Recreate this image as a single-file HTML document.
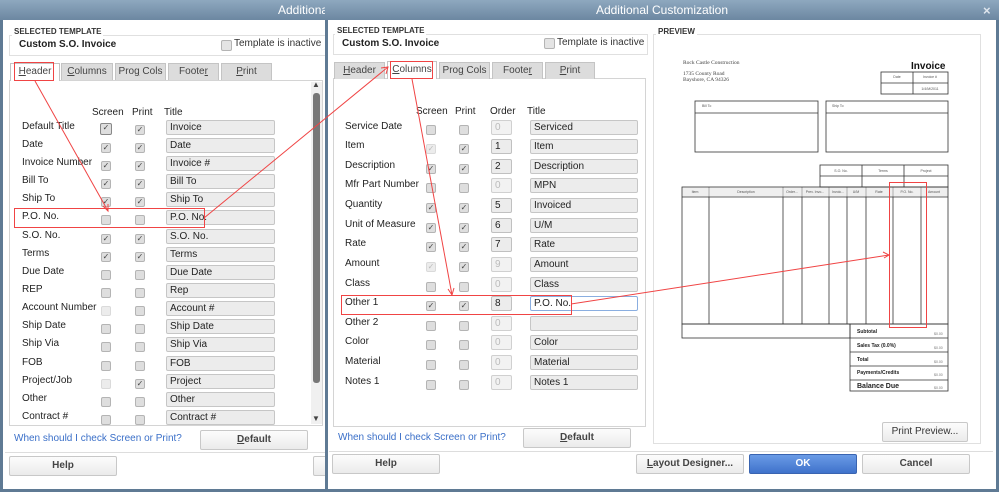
<!DOCTYPE html>
<html><head><meta charset="utf-8"><style>
*{margin:0;padding:0;box-sizing:border-box}
body{width:999px;height:493px;overflow:hidden;background:#fff;font-family:"Liberation Sans",Arial,sans-serif;font-size:10px;color:#222;position:relative}
.a{position:absolute}
.tb{position:absolute;height:20px;background:linear-gradient(#8ea8bf,#6c87a1);color:#fff;font-size:12px;line-height:20px}
.frame{position:absolute;border:3px solid #5f7a94;border-top:none;background:#fff}
.fs{position:absolute;border:1px solid #e0e0e0}
.leg{position:absolute;background:#fff;font-size:8px;font-weight:bold;color:#333;padding:0 2px;line-height:9px}
.tab{position:absolute;height:17px;background:#dcdcdc;border:1px solid #c4c4c4;border-bottom:none;font-size:10px;color:#444;text-align:center;line-height:16px}
.tab.on{background:#fff;height:18px}
.panel{position:absolute;border:1px solid #d4d4d4;background:#fff}
.r{position:absolute;left:0;width:1px;height:16px}
.lb{position:absolute;top:1px;white-space:nowrap;font-size:10px;color:#222}
.cb{position:absolute;top:5px;width:10px;height:10px;background:#dedede;border:1px solid #b4b4b4;border-radius:2px;font-style:normal;font-size:8px;line-height:8px;text-align:center;color:#444}
.cb.k::after{content:"✓"}
.cb.d{background:#ececec;border-color:#dadada;color:#bbb}
.in{position:absolute;top:0;height:15px;background:#ececec;border:1px solid #c6c6c6;border-radius:2px;padding-left:3px;font-size:10px;line-height:13px;color:#222;white-space:nowrap}
.od{position:absolute;top:0;height:15px;width:21px;background:#f2f2f2;border:1px solid #d0d0d0;border-radius:2px;padding-left:3px;font-size:10px;line-height:13px;color:#bbb}
.od.e{background:#ececec;border-color:#c0c0c0;color:#222}
.btn{position:absolute;height:20px;background:linear-gradient(#fcfcfc,#ebebeb);border:1px solid #c8c8c8;border-radius:2px;font-size:10px;font-weight:bold;color:#444;text-align:center;line-height:18px}
.hd{position:absolute;font-size:10px;color:#222}
.lnk{position:absolute;color:#3a6fc8;font-size:10px}
.sep{position:absolute;height:1px;background:#ddd}
u{text-decoration:underline}
</style></head><body>

<!-- LEFT DIALOG -->
<div class="frame" style="left:0;top:0;width:330px;height:492px"></div>
<div class="tb" style="left:0;top:0;width:330px;padding-left:278px">Additional C</div>
<div class="fs" style="left:9px;top:35px;width:320px;height:21px"></div>
<div class="leg" style="left:12px;top:27px">SELECTED TEMPLATE</div>
<div class="a" style="left:19px;top:39px;font-weight:bold;font-size:10px">Custom S.O. Invoice</div>
<i class="cb" style="left:221px;top:40px;width:11px;height:11px;background:#e4e4e4"></i>
<div class="a" style="left:234px;top:38px;font-size:10px;color:#333">Template is inactive</div>

<div class="panel" style="left:9px;top:80px;width:314px;height:346px"></div>
<div class="tab on" style="left:10px;top:63px;width:50px"><u>H</u>eader</div>
<div class="tab" style="left:61px;top:63px;width:52px"><u>C</u>olumns</div>
<div class="tab" style="left:115px;top:63px;width:51px">Pro<u>g</u> Cols</div>
<div class="tab" style="left:168px;top:63px;width:51px">Foote<u>r</u></div>
<div class="tab" style="left:221px;top:63px;width:51px"><u>P</u>rint</div>
<div class="a" style="left:311px;top:82px;width:11px;height:342px;background:#f0f0f0"></div>
<div class="a" style="left:313px;top:93px;width:7px;height:290px;background:#777;border-radius:3px"></div>
<div class="a" style="left:312px;top:80px;font-size:8px;color:#444">▲</div>
<div class="a" style="left:312px;top:414px;font-size:8px;color:#444">▼</div>

<div class="hd" style="left:92px;top:107px">Screen</div>
<div class="hd" style="left:132px;top:107px">Print</div>
<div class="hd" style="left:164px;top:107px">Title</div>

<div class="r" style="top:120px"><span class="lb" style="left:22px">Default Title</span><i class="cb k" style="left:100px;top:3px;width:12px;height:12px;border-color:#888"></i><i class="cb k" style="left:135px"></i><span class="in" style="left:166px;width:109px">Invoice</span></div>
<div class="r" style="top:138px"><span class="lb" style="left:22px">Date</span><i class="cb k" style="left:101px"></i><i class="cb k" style="left:135px"></i><span class="in" style="left:166px;width:109px">Date</span></div>
<div class="r" style="top:156px"><span class="lb" style="left:22px">Invoice Number</span><i class="cb k" style="left:101px"></i><i class="cb k" style="left:135px"></i><span class="in" style="left:166px;width:109px">Invoice #</span></div>
<div class="r" style="top:174px"><span class="lb" style="left:22px">Bill To</span><i class="cb k" style="left:101px"></i><i class="cb k" style="left:135px"></i><span class="in" style="left:166px;width:109px">Bill To</span></div>
<div class="r" style="top:192px"><span class="lb" style="left:22px">Ship To</span><i class="cb k" style="left:101px"></i><i class="cb k" style="left:135px"></i><span class="in" style="left:166px;width:109px">Ship To</span></div>
<div class="r" style="top:210px"><span class="lb" style="left:22px">P.O. No.</span><i class="cb" style="left:101px"></i><i class="cb" style="left:135px"></i><span class="in" style="left:166px;width:109px">P.O. No.</span></div>
<div class="r" style="top:229px"><span class="lb" style="left:22px">S.O. No.</span><i class="cb k" style="left:101px"></i><i class="cb k" style="left:135px"></i><span class="in" style="left:166px;width:109px">S.O. No.</span></div>
<div class="r" style="top:247px"><span class="lb" style="left:22px">Terms</span><i class="cb k" style="left:101px"></i><i class="cb k" style="left:135px"></i><span class="in" style="left:166px;width:109px">Terms</span></div>
<div class="r" style="top:265px"><span class="lb" style="left:22px">Due Date</span><i class="cb" style="left:101px"></i><i class="cb" style="left:135px"></i><span class="in" style="left:166px;width:109px">Due Date</span></div>
<div class="r" style="top:283px"><span class="lb" style="left:22px">REP</span><i class="cb" style="left:101px"></i><i class="cb" style="left:135px"></i><span class="in" style="left:166px;width:109px">Rep</span></div>
<div class="r" style="top:301px"><span class="lb" style="left:22px">Account Number</span><i class="cb d" style="left:101px"></i><i class="cb" style="left:135px"></i><span class="in" style="left:166px;width:109px">Account #</span></div>
<div class="r" style="top:319px"><span class="lb" style="left:22px">Ship Date</span><i class="cb" style="left:101px"></i><i class="cb" style="left:135px"></i><span class="in" style="left:166px;width:109px">Ship Date</span></div>
<div class="r" style="top:337px"><span class="lb" style="left:22px">Ship Via</span><i class="cb" style="left:101px"></i><i class="cb" style="left:135px"></i><span class="in" style="left:166px;width:109px">Ship Via</span></div>
<div class="r" style="top:356px"><span class="lb" style="left:22px">FOB</span><i class="cb" style="left:101px"></i><i class="cb" style="left:135px"></i><span class="in" style="left:166px;width:109px">FOB</span></div>
<div class="r" style="top:374px"><span class="lb" style="left:22px">Project/Job</span><i class="cb d" style="left:101px"></i><i class="cb k" style="left:135px"></i><span class="in" style="left:166px;width:109px">Project</span></div>
<div class="r" style="top:392px"><span class="lb" style="left:22px">Other</span><i class="cb" style="left:101px"></i><i class="cb" style="left:135px"></i><span class="in" style="left:166px;width:109px">Other</span></div>
<div class="r" style="top:410px"><span class="lb" style="left:22px">Contract #</span><i class="cb" style="left:101px"></i><i class="cb" style="left:135px"></i><span class="in" style="left:166px;width:109px">Contract #</span></div>

<div class="lnk" style="left:14px;top:433px">When should I check Screen or Print?</div>
<div class="btn" style="left:200px;top:430px;width:108px"><u>D</u>efault</div>
<div class="sep" style="left:5px;top:452px;width:322px"></div>
<div class="btn" style="left:9px;top:456px;width:108px">Help</div>
<div class="btn" style="left:313px;top:456px;width:20px"></div>

<!-- MIDDLE / RIGHT DIALOG -->
<div class="frame" style="left:325px;top:0;width:674px;height:492px"></div>
<div class="tb" style="left:325px;top:0;width:674px;text-align:center">Additional Customization</div>
<div class="a" style="left:983px;top:3px;color:#dfe6ee;font-size:13px;font-weight:bold">×</div>

<div class="fs" style="left:333px;top:34px;width:315px;height:21px"></div>
<div class="leg" style="left:335px;top:26px">SELECTED TEMPLATE</div>
<div class="a" style="left:342px;top:38px;font-weight:bold;font-size:10px">Custom S.O. Invoice</div>
<i class="cb" style="left:544px;top:38px;width:11px;height:11px;background:#e4e4e4"></i>
<div class="a" style="left:557px;top:37px;font-size:10px;color:#333">Template is inactive</div>

<div class="panel" style="left:333px;top:78px;width:313px;height:349px"></div>
<div class="tab" style="left:334px;top:62px;width:51px"><u>H</u>eader</div>
<div class="tab on" style="left:387px;top:61px;width:50px"><u>C</u>olumns</div>
<div class="tab" style="left:439px;top:62px;width:51px">Pro<u>g</u> Cols</div>
<div class="tab" style="left:492px;top:62px;width:51px">Foote<u>r</u></div>
<div class="tab" style="left:545px;top:62px;width:50px"><u>P</u>rint</div>

<div class="hd" style="left:416px;top:106px">Screen</div>
<div class="hd" style="left:455px;top:106px">Print</div>
<div class="hd" style="left:490px;top:106px">Order</div>
<div class="hd" style="left:527px;top:106px">Title</div>

<div class="r" style="top:120px"><span class="lb" style="left:345px">Service Date</span><i class="cb" style="left:426px"></i><i class="cb" style="left:459px"></i><span class="od" style="left:491px">0</span><span class="in" style="left:530px;width:108px">Serviced</span></div>
<div class="r" style="top:139px"><span class="lb" style="left:345px">Item</span><i class="cb k d" style="left:426px"></i><i class="cb k" style="left:459px"></i><span class="od e" style="left:491px">1</span><span class="in" style="left:530px;width:108px">Item</span></div>
<div class="r" style="top:159px"><span class="lb" style="left:345px">Description</span><i class="cb k" style="left:426px"></i><i class="cb k" style="left:459px"></i><span class="od e" style="left:491px">2</span><span class="in" style="left:530px;width:108px">Description</span></div>
<div class="r" style="top:178px"><span class="lb" style="left:345px">Mfr Part Number</span><i class="cb" style="left:426px"></i><i class="cb" style="left:459px"></i><span class="od" style="left:491px">0</span><span class="in" style="left:530px;width:108px">MPN</span></div>
<div class="r" style="top:198px"><span class="lb" style="left:345px">Quantity</span><i class="cb k" style="left:426px"></i><i class="cb k" style="left:459px"></i><span class="od e" style="left:491px">5</span><span class="in" style="left:530px;width:108px">Invoiced</span></div>
<div class="r" style="top:218px"><span class="lb" style="left:345px">Unit of Measure</span><i class="cb k" style="left:426px"></i><i class="cb k" style="left:459px"></i><span class="od e" style="left:491px">6</span><span class="in" style="left:530px;width:108px">U/M</span></div>
<div class="r" style="top:237px"><span class="lb" style="left:345px">Rate</span><i class="cb k" style="left:426px"></i><i class="cb k" style="left:459px"></i><span class="od e" style="left:491px">7</span><span class="in" style="left:530px;width:108px">Rate</span></div>
<div class="r" style="top:257px"><span class="lb" style="left:345px">Amount</span><i class="cb k d" style="left:426px"></i><i class="cb k" style="left:459px"></i><span class="od" style="left:491px">9</span><span class="in" style="left:530px;width:108px">Amount</span></div>
<div class="r" style="top:277px"><span class="lb" style="left:345px">Class</span><i class="cb" style="left:426px"></i><i class="cb" style="left:459px"></i><span class="od" style="left:491px">0</span><span class="in" style="left:530px;width:108px">Class</span></div>
<div class="r" style="top:296px"><span class="lb" style="left:345px">Other 1</span><i class="cb k" style="left:426px"></i><i class="cb k" style="left:459px"></i><span class="od e" style="left:491px">8</span><span class="in" style="left:530px;width:108px;background:#fff;border-color:#8aaee0">P.O. No.</span></div>
<div class="r" style="top:316px"><span class="lb" style="left:345px">Other 2</span><i class="cb" style="left:426px"></i><i class="cb" style="left:459px"></i><span class="od" style="left:491px">0</span><span class="in" style="left:530px;width:108px"></span></div>
<div class="r" style="top:335px"><span class="lb" style="left:345px">Color</span><i class="cb" style="left:426px"></i><i class="cb" style="left:459px"></i><span class="od" style="left:491px">0</span><span class="in" style="left:530px;width:108px">Color</span></div>
<div class="r" style="top:355px"><span class="lb" style="left:345px">Material</span><i class="cb" style="left:426px"></i><i class="cb" style="left:459px"></i><span class="od" style="left:491px">0</span><span class="in" style="left:530px;width:108px">Material</span></div>
<div class="r" style="top:375px"><span class="lb" style="left:345px">Notes 1</span><i class="cb" style="left:426px"></i><i class="cb" style="left:459px"></i><span class="od" style="left:491px">0</span><span class="in" style="left:530px;width:108px">Notes 1</span></div>

<div class="lnk" style="left:338px;top:432px">When should I check Screen or Print?</div>
<div class="btn" style="left:523px;top:428px;width:108px"><u>D</u>efault</div>
<div class="sep" style="left:329px;top:451px;width:664px"></div>
<div class="btn" style="left:332px;top:454px;width:108px">Help</div>
<div class="btn" style="left:636px;top:454px;width:108px"><u>L</u>ayout Designer...</div>
<div class="btn" style="left:749px;top:454px;width:108px;background:linear-gradient(#6a9be6,#3f72cb);border-color:#3a64b0;color:#fff">OK</div>
<div class="btn" style="left:862px;top:454px;width:108px">Cancel</div>

<!-- PREVIEW -->
<div class="fs" style="left:653px;top:34px;width:328px;height:410px"></div>
<div class="leg" style="left:656px;top:27px">PREVIEW</div>
<div class="btn" style="left:882px;top:422px;width:86px;font-weight:normal;color:#333">Print Preview...</div>

<svg class="a" style="left:0;top:0" width="999" height="493" viewBox="0 0 999 493">
<g font-family="Liberation Serif,serif" font-size="5.5" fill="#444">
<text x="683" y="64">Rock Castle Construction</text>
<text x="683" y="75">1735 County Road</text>
<text x="683" y="81">Bayshore, CA 94326</text>
</g>
<text x="911" y="69" font-family="Liberation Sans,sans-serif" font-weight="bold" font-size="10" fill="#111">Invoice</text>
<g fill="none" stroke="#333" stroke-width="0.8">
<rect x="881" y="72" width="67" height="22"/><line x1="881" y1="83" x2="948" y2="83"/><line x1="913" y1="72" x2="913" y2="94"/>
<rect x="695" y="101" width="123" height="51"/><line x1="695" y1="113" x2="818" y2="113"/>
<rect x="826" y="101" width="122" height="51"/><line x1="826" y1="113" x2="948" y2="113"/>
<rect x="820" y="165" width="128" height="22"/><line x1="820" y1="176" x2="948" y2="176"/><line x1="862" y1="165" x2="862" y2="187"/><line x1="904" y1="165" x2="904" y2="187"/>
<rect x="682" y="187" width="266" height="137"/><line x1="682" y1="197" x2="948" y2="197"/>
<line x1="709" y1="187" x2="709" y2="324"/><line x1="783" y1="187" x2="783" y2="324"/><line x1="802" y1="187" x2="802" y2="324"/><line x1="829" y1="187" x2="829" y2="324"/><line x1="847" y1="187" x2="847" y2="324"/><line x1="866" y1="187" x2="866" y2="324"/><line x1="893" y1="187" x2="893" y2="324"/><line x1="921" y1="187" x2="921" y2="324"/>
<rect x="682" y="324" width="168" height="14"/>
<rect x="850" y="324" width="98" height="67"/>
<line x1="850" y1="338" x2="948" y2="338"/><line x1="850" y1="352" x2="948" y2="352"/><line x1="850" y1="366" x2="948" y2="366"/><line x1="850" y1="380" x2="948" y2="380"/>
</g>
<rect x="682.5" y="187.5" width="265" height="9" fill="#e4e4e4" opacity="0.6"/>
<g font-family="Liberation Sans,sans-serif" font-size="3.5" fill="#555" text-anchor="middle">
<text x="897" y="78">Date</text><text x="930" y="78">Invoice #</text><text x="930" y="90">1/4/M/2011</text>
<text x="841" y="172">S.O. No.</text><text x="883" y="172">Terms</text><text x="926" y="172">Project</text>
<text x="695" y="193">Item</text><text x="746" y="193">Description</text><text x="792" y="193">Order...</text><text x="815" y="193">Prev. Invo...</text><text x="838" y="193">Invoic...</text><text x="856" y="193">U/M</text><text x="879" y="193">Rate</text><text x="907" y="193">P.O. No.</text><text x="934" y="193">Amount</text>
</g>
<g font-family="Liberation Sans,sans-serif" font-size="3.5" fill="#555"><text x="702" y="107">Bill To</text><text x="832" y="107">Ship To</text></g>
<g font-family="Liberation Sans,sans-serif" font-weight="bold" font-size="5" fill="#222">
<text x="857" y="333">Subtotal</text><text x="857" y="347">Sales Tax (0.0%)</text><text x="857" y="361">Total</text><text x="857" y="374">Payments/Credits</text><text x="857" y="388" font-size="7">Balance Due</text>
</g>
<g font-family="Liberation Sans,sans-serif" font-size="3.5" fill="#777"><text x="934" y="335">$0.00</text><text x="934" y="349">$0.00</text><text x="934" y="363">$0.00</text><text x="934" y="376">$0.00</text><text x="934" y="389">$0.00</text></g>

<!-- red annotations -->
<g fill="none" stroke="#f04444" stroke-width="1">
<rect x="14.5" y="62.5" width="39" height="18"/>
<line x1="35" y1="81" x2="108" y2="211"/><polyline points="103,206 108,211 108,204"/>
<rect x="14.5" y="208.5" width="190" height="19"/>
<line x1="204" y1="218" x2="388" y2="67"/><polyline points="381,68 388,67 386,74"/>
<rect x="390.5" y="61.5" width="42" height="17"/>
<line x1="412" y1="79" x2="452" y2="295"/><polyline points="448,289 452,295 454,288"/>
<rect x="341.5" y="295.5" width="230" height="19"/>
<line x1="571" y1="304" x2="889" y2="255"/><polyline points="883,252 889,255 884,258"/>
<rect x="889.5" y="182.5" width="37" height="145"/>
</g>
</svg>
</body></html>
